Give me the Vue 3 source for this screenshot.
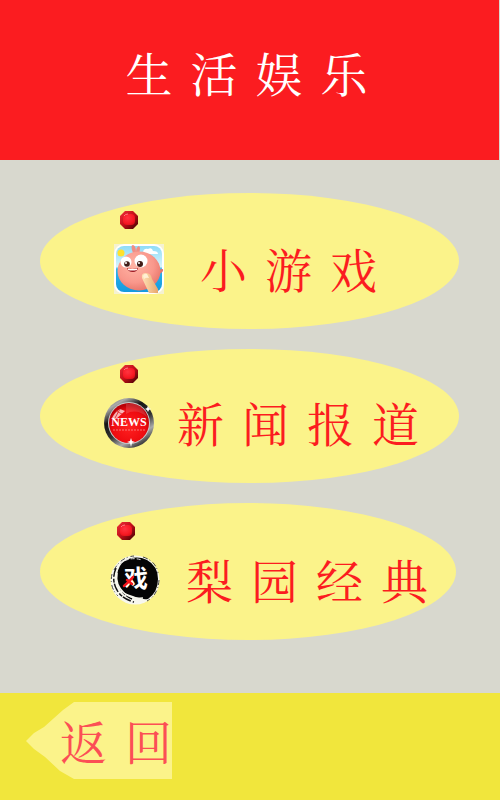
<script setup>
const title = '生活娱乐'
const items = [
  { id: 'game', label: '小游戏' },
  { id: 'news', label: '新闻报道' },
  { id: 'opera', label: '梨园经典' }
]
const back = '返回'
</script>

<template>
  <div class="page">
    <header class="header">
      <h1 class="words"><span v-for="c in title" :key="c">{{ c }}</span></h1>
    </header>

    <main class="menu">
      <button v-for="item in items" :key="item.id" type="button" class="item" :class="item.id">
        <svg class="gem" viewBox="0 0 18 18" aria-hidden="true">
          <defs>
            <linearGradient :id="'gem-' + item.id" x1="0" y1="0" x2="1" y2="1">
              <stop offset="0" stop-color="#f0303a" />
              <stop offset=".5" stop-color="#c01018" />
              <stop offset="1" stop-color="#3c0002" />
            </linearGradient>
            <radialGradient :id="'face-' + item.id" cx=".4" cy=".35" r=".7">
              <stop offset="0" stop-color="#ff3440" />
              <stop offset=".7" stop-color="#f81a24" />
              <stop offset="1" stop-color="#e01018" />
            </radialGradient>
          </defs>
          <path d="M5 0h8l5 5v8l-5 5H5l-5-5V5z" :fill="'url(#gem-' + item.id + ')'" />
          <rect x="3" y="3" width="12" height="11" rx="4" :fill="'url(#face-' + item.id + ')'" />
          <path d="M4 5q1-2 4-2" fill="none" stroke="#ff7b83" stroke-width="1" />
        </svg>

        <span class="row">
          <svg v-if="item.id === 'game'" class="icon" viewBox="0 0 50 50" aria-hidden="true">
            <defs>
              <linearGradient id="sky" x1="0" y1="0" x2="0" y2="1">
                <stop offset="0" stop-color="#8edcf8" />
                <stop offset=".45" stop-color="#d7f4fc" />
                <stop offset=".5" stop-color="#29b4ee" />
                <stop offset="1" stop-color="#159ade" />
              </linearGradient>
              <radialGradient id="body" cx=".4" cy=".35" r=".68">
                <stop offset="0" stop-color="#ffb5a5" />
                <stop offset=".65" stop-color="#f9988c" />
                <stop offset="1" stop-color="#e8776c" />
              </radialGradient>
              <linearGradient id="finger">
                <stop offset="0" stop-color="#ffe2b7" />
                <stop offset="1" stop-color="#e8a66c" />
              </linearGradient>
            </defs>
            <rect width="50" height="50" fill="#f5f2d2" />
            <rect width="50" height="50" rx="10" fill="#fff" />
            <rect x="2" y="2" width="46" height="46" rx="8" fill="url(#sky)" />
            <path d="M29 8q1-4 5-3 4-2 5 2 5 0 5 3H29z" fill="#fff" />
            <circle cx="7" cy="9" r="3.500" fill="#ffe12b" />
            <path d="M19 9Q16 1 19 1q3 1 3 7 0-5 3-6 2 1 0 8z" fill="#f18c83" />
            <path d="M43 26l6-1q1 3-4 5z" fill="#e8776d" />
            <ellipse cx="25" cy="27" rx="21.500" ry="19.500" fill="url(#body)" />
            <circle cx="12" cy="18" r="5.500" fill="#fff" />
            <circle cx="27" cy="17" r="6.500" fill="#fff" />
            <circle cx="13" cy="20" r="2.800" fill="#411c17" />
            <circle cx="26" cy="20" r="3" fill="#411c17" />
            <circle cx="12" cy="19" r="1" fill="#fff" />
            <circle cx="25" cy="19" r="1" fill="#fff" />
            <path d="M13 24q5 2 11 0-1 4-5 4-5 0-6-4z" fill="#9d1721" />
            <path d="M14 24.500q5 1 9 0v1.500q-5 1-9 0z" fill="#fff" />
            <path d="M28 34q-1-5 4-5 5 0 6 6l6 10v4h-9z" fill="url(#finger)" />
            <path d="M29 32q1-3 4-2l2 4q-3-1-5 1z" fill="#fff0d4" />
          </svg>

          <svg v-else-if="item.id === 'news'" class="icon" viewBox="0 0 50 50" aria-hidden="true">
            <defs>
              <linearGradient id="rim" x1="0" y1="0" x2=".6" y2="1">
                <stop offset="0" stop-color="#555" />
                <stop offset=".2" stop-color="#aaa" />
                <stop offset=".4" stop-color="#151515" />
                <stop offset=".65" stop-color="#333" />
                <stop offset=".85" stop-color="#aaa" />
                <stop offset="1" stop-color="#444" />
              </linearGradient>
              <radialGradient id="disc" cx=".5" cy=".6" r=".55">
                <stop offset="0" stop-color="#ff2020" />
                <stop offset=".75" stop-color="#ee0b10" />
                <stop offset="1" stop-color="#b90007" />
              </radialGradient>
            </defs>
            <circle cx="25" cy="25" r="25" fill="url(#rim)" />
            <circle cx="25" cy="25" r="21" fill="#c9c9c9" />
            <circle cx="25" cy="25" r="20" fill="url(#disc)" />
            <path d="M8 20Q11 14 16 11l5 2-9 8z" fill="#fff" opacity=".7" />
            <path d="M16 11l-5 9M12 13l6 3" stroke="#e53a3a" stroke-width="1" />
            <path d="M22 6q15-3 21 13-11-9-21-3z" fill="#fff" opacity=".14" />
            <text x="25" y="28" class="news-text">NEWS</text>
            <path d="M9 32h33" stroke="#ffb5b5" stroke-width="1" stroke-dasharray="2 1" opacity=".6" />
            <path d="M27 40l1 3 3 1-3 1-1 4-1-4-3-1 3-1z" fill="#fff" />
            <path d="M44 8l1 2 2 1-2 1-1 2-1-2-2-1 2-1z" fill="#fff" />
          </svg>

          <svg v-else class="icon" viewBox="0 0 50 50" aria-hidden="true">
            <circle cx="25" cy="25" r="24.500" fill="#f7f7ee" />
            <path d="M4 15Q11 2 24 1M2 19Q-1 32 8 41M33 2Q46 6 48 18M49 25Q48 40 37 46" fill="none" stroke="#444" stroke-width="1" stroke-dasharray="5 2 1 3" />
            <path d="M12 8Q24-1 37 5 48 11 48 24q0 13-10 20-7 1-15-3Q7 37 7 23q0-9 5-15z" fill="#050505" />
            <path d="M6 13Q1 25 7 35q5 9 17 12M8 27q3 12 14 17" fill="none" stroke="#111" stroke-width="1.500" stroke-dasharray="9 2 4 1" />
            <path d="M7 18Q5 30 14 38q7 6 19 5" fill="none" stroke="#f7f7ee" stroke-width="1.500" />
            <path d="M10 9Q19 1 32 5" fill="none" stroke="#ddd" stroke-width="1" stroke-dasharray="4 2" />
            <text x="26" y="32" class="opera-text">戏</text>
            <path d="M14 31q5-4 9-9M17 25l5 4" fill="none" stroke="#f5161b" stroke-width="2.500" stroke-linecap="round" />
          </svg>

          <span class="words"><span v-for="c in item.label" :key="c">{{ c }}</span></span>
        </span>
      </button>
    </main>

    <footer class="footer">
      <button type="button" class="back">
        <svg class="arrow" viewBox="0 0 146 77" preserveAspectRatio="none" aria-hidden="true">
          <path d="M48 0H146V77H48L34 69 19 55 8 47 0 39 8 31 18 25 37 8z" fill="#fbf38a" />
        </svg>
        <span class="words"><span v-for="c in back" :key="c">{{ c }}</span></span>
      </button>
    </footer>
  </div>
</template>

<style>
body {
  margin: 0;
}
</style>

<style scoped>
.page {
  display: flex;
  flex-direction: column;
  min-height: 100vh;
  background: #d8d8ce;
  color: #fb1c20;
  font-family: "Noto Serif CJK SC", "Noto Sans CJK SC", serif;
}

.header {
  display: flex;
  justify-content: center;
  box-sizing: border-box;
  height: 160px;
  margin-right: 1px;
  padding: 38px 6px 0 0;
  background: #fb1c20;
  color: #fff;
}

.words {
  display: flex;
  gap: 18px;
  margin: 0;
  font-size: 47px;
  font-weight: 400;
  line-height: 68px;
}

.menu {
  display: flex;
  flex: 1;
  flex-direction: column;
  gap: 20px;
  padding: 33px 41px 53px 40px;
}

.item {
  display: flex;
  flex-direction: column;
  align-items: flex-start;
  gap: 15px;
  height: 136px;
  padding: 18px 0 0 80px;
  border: 0;
  border-radius: 50%;
  background: #fbf38a;
  color: inherit;
  font-family: inherit;
  cursor: pointer;
}

.item .words {
  padding-bottom: 2px;
}

.news {
  height: 134px;
  padding-top: 16px;
}

.opera {
  height: 137px;
  margin-right: 3px;
  padding: 19px 0 0 77px;
}

.gem {
  width: 18px;
  height: 18px;
}

.row {
  display: flex;
  align-items: center;
  gap: 36px;
  height: 50px;
  margin-left: -6px;
}

.news .row {
  gap: 23px;
  margin-left: -16px;
}

.opera .row {
  gap: 26px;
  margin-left: -7px;
}

.icon {
  flex: none;
  width: 50px;
  height: 50px;
}

.news-text {
  fill: #fff;
  font-family: "Liberation Serif", serif;
  font-size: 12px;
  font-weight: 700;
  text-anchor: middle;
}

.opera-text {
  fill: #fff;
  font-family: "Noto Sans CJK SC", sans-serif;
  font-size: 24px;
  font-weight: 700;
  text-anchor: middle;
}

.footer {
  box-sizing: border-box;
  height: 107px;
  padding: 9px 26px;
  background: #f1e63c;
}

.back {
  position: relative;
  height: 77px;
  padding: 0 0 2px 34px;
  border: 0;
  background: none;
  color: #fb4f55;
  font-family: inherit;
  cursor: pointer;
}

.back .words {
  position: relative;
}

.arrow {
  position: absolute;
  inset: 0;
  width: 100%;
  height: 100%;
}
</style>
